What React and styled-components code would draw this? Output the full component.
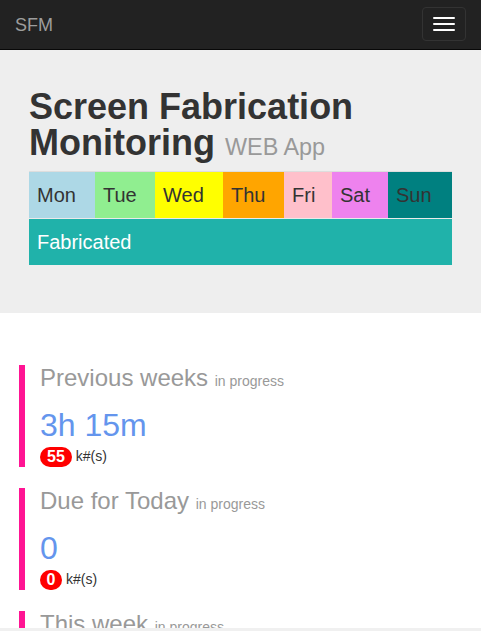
import React from 'react'
import styled, { createGlobalStyle } from 'styled-components'

const GlobalStyle = createGlobalStyle`
  html, body {
    margin: 0;
    padding: 0;
    background: #fff;
  }

  body {
    font-family: 'Liberation Sans', Arial, sans-serif;
    font-size: 14px;
    line-height: 1.42857;
    color: #333;
  }

  * {
    box-sizing: border-box;
  }
`

const Navbar = styled.nav`
  align-items: flex-start;
  background: #222;
  border-bottom: 1px solid #080808;
  display: flex;
  height: 50px;
  justify-content: space-between;
`

const Brand = styled.a`
  color: #9d9d9d;
  font-size: 18px;
  line-height: 20px;
  padding: 15px 15px;
  text-decoration: none;
`

const Toggle = styled.button`
  background: transparent;
  border: 1px solid #333;
  border-radius: 4px;
  display: flex;
  flex-direction: column;
  gap: 4px;
  margin: 7px 15px 0 0;
  padding: 9px 10px;
`

const IconBar = styled.span`
  background: #fff;
  border-radius: 1px;
  display: block;
  height: 2px;
  width: 22px;
`

const Jumbotron = styled.header`
  background: #eee;
  padding: 39px 29px 48px;
`

const Title = styled.h1`
  color: #333;
  font-size: 36px;
  font-weight: 700;
  line-height: 36px;
  margin: 0 0 10px;
`

const Subtitle = styled.small`
  color: #999;
  font-size: 65%;
  font-weight: 400;
  line-height: 1;
`

const Week = styled.div`
  border-top: 1px solid #ddd;
  display: grid;
  grid-template-columns: 66fr 60fr 68fr 61fr 48fr 56fr 64fr;
`

const Day = styled.div`
  background: ${({ color }) => color};
  color: #333;
  font-size: 20px;
  line-height: 30px;
  padding: 8px;
`

const Fabricated = styled.div`
  background: #20b2aa;
  border-top: 1px solid #eaeaea;
  color: #fff;
  font-size: 20px;
  line-height: 30px;
  padding: 8px;
`

const Content = styled.main`
  padding: 52px 19px 20px;
`

const Card = styled.section`
  border-left: 6px solid #ff1493;
  margin-bottom: 21px;
  padding-left: 15px;
`

const CardTitle = styled.h3`
  color: #999;
  font-size: 24px;
  font-weight: 400;
  line-height: 26px;
  margin: 0 0 16px;
`

const CardNote = styled.small`
  color: #999;
  font-size: 14px;
  line-height: 1;
`

const Value = styled.div`
  color: #6495ed;
  font-size: 32px;
  line-height: 36px;
  margin-bottom: 3px;
`

const CountRow = styled.div`
  align-items: center;
  display: flex;
  font-size: 14px;
  gap: 4px;
  height: 21px;
`

const Badge = styled.span`
  background: #f00;
  border-radius: 10px;
  color: #fff;
  font-size: 16px;
  font-weight: 700;
  height: 20px;
  line-height: 20px;
  min-width: 22px;
  padding: 0 ${({ wide }) => (wide ? '7px' : '5px')};
  text-align: center;
`

const BottomStrip = styled.div`
  background: #f0f0f0;
  bottom: 0;
  height: 3px;
  left: 0;
  position: fixed;
  right: 0;
`

const days = [
  { name: 'Mon', color: '#add8e6' },
  { name: 'Tue', color: '#90ee90' },
  { name: 'Wed', color: '#ffff00' },
  { name: 'Thu', color: '#ffa500' },
  { name: 'Fri', color: '#ffc0cb' },
  { name: 'Sat', color: '#ee82ee' },
  { name: 'Sun', color: '#008080' },
]

const stats = [
  { title: 'Previous weeks', time: '3h 15m', count: 55 },
  { title: 'Due for Today', time: '0', count: 0 },
  { title: 'This week', time: '0', count: 0 },
]

const App = () => (
  <>
    <GlobalStyle />
    <Navbar>
      <Brand href="#">SFM</Brand>
      <Toggle aria-label="Toggle navigation">
        <IconBar />
        <IconBar />
        <IconBar />
      </Toggle>
    </Navbar>
    <Jumbotron>
      <Title>
        Screen Fabrication Monitoring <Subtitle>WEB App</Subtitle>
      </Title>
      <Week>
        {days.map(d => (
          <Day key={d.name} color={d.color}>
            {d.name}
          </Day>
        ))}
      </Week>
      <Fabricated>Fabricated</Fabricated>
    </Jumbotron>
    <Content>
      {stats.map(s => (
        <Card key={s.title}>
          <CardTitle>
            {s.title} <CardNote>in progress</CardNote>
          </CardTitle>
          <Value>{s.time}</Value>
          <CountRow>
            <Badge wide={s.count > 9}>{s.count}</Badge>
            k#(s)
          </CountRow>
        </Card>
      ))}
    </Content>
    <BottomStrip />
  </>
)

export default App
